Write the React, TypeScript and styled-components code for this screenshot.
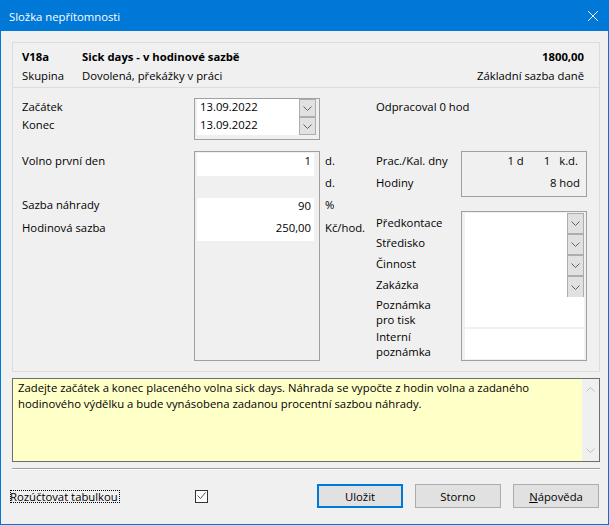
import * as React from 'react'
import styled, { createGlobalStyle } from 'styled-components'

const GlobalStyle = createGlobalStyle`
  html, body {
    margin: 0;
    padding: 0;
    background: #f0f0f0;
  }
  body {
    font-family: 'Open Sans', 'Liberation Sans', sans-serif;
    font-size: 11.3px;
    color: #000;
  }
`

const Dialog = styled.div`
  box-sizing: border-box;
  width: 609px;
  height: 525px;
  background: #f0f0f0;
  border: 1px solid #0078d7;
  border-top: 0;
  display: flex;
  flex-direction: column;
  overflow: hidden;
`

const TitleBar = styled.div`
  height: 31px;
  flex: none;
  background: #0078d7;
  color: #fff;
  display: flex;
  align-items: center;
  justify-content: space-between;
  padding: 0 11px 0 9px;
  margin: 0 -1px;
`

const TitleText = styled.span`
  padding-top: 2px;
`

const Body = styled.div`
  flex: 1;
  display: flex;
  flex-direction: column;
  padding: 11px 8px 0 11px;
  min-height: 0;
`

const Panel = styled.div`
  box-sizing: border-box;
  height: 330px;
  flex: none;
  border: 1px solid #dcdcdc;
  display: flex;
  flex-direction: column;
`

const Head = styled.div`
  height: 45px;
  flex: none;
  box-sizing: border-box;
  border-bottom: 1px solid #dcdcdc;
  padding: 1px 15px 0 9px;
  display: grid;
  grid-template-columns: 60px 1fr auto;
  grid-auto-rows: 19px;
  align-content: center;
  align-items: center;
`

const Strong = styled.div<{ $right?: boolean }>`
  font-weight: 700;
  text-align: ${(p) => (p.$right ? 'right' : 'left')};
`

const Form = styled.div`
  flex: 1;
  display: grid;
  grid-template-columns: 172px 131px 51px 1fr;
  grid-template-rows: 53px 1fr;
  padding: 10px 9px 0 9px;
  min-height: 0;
`

const LabelColumn = styled.div<{ $top?: number }>`
  display: flex;
  flex-direction: column;
  padding-top: ${(p) => p.$top ?? 0}px;
`

const Label = styled.div<{ $h?: number }>`
  height: ${(p) => p.$h ?? 18}px;
  line-height: 18px;
  flex: none;
  white-space: nowrap;
`

const DateBox = styled.div`
  box-sizing: border-box;
  width: 126px;
  height: 42px;
  border: 1px solid #a0a0a0;
  padding: 0 3px 0 2px;
`

const DateRow = styled.div`
  height: 18px;
  background: #fff;
  display: flex;
  justify-content: space-between;
  padding-left: 3px;
  line-height: 16px;
`

const Arrow = styled.div<{ $open?: boolean }>`
  box-sizing: border-box;
  width: 17px;
  height: 100%;
  background: #e1e1e1;
  border: 1px solid #adadad;
  border-bottom-width: ${(p) => (p.$open ? 0 : 1)}px;
  display: flex;
  align-items: center;
  justify-content: center;
  flex: none;
`

const FieldBox = styled.div`
  box-sizing: border-box;
  width: 126px;
  height: 210px;
  border: 1px solid #a0a0a0;
  padding: 1px 5px 0 2px;
  display: flex;
  flex-direction: column;
`

const Cell = styled.div<{ $h: number; $blank?: boolean }>`
  height: ${(p) => p.$h}px;
  flex: none;
  background: ${(p) => (p.$blank ? 'transparent' : '#fff')};
  text-align: right;
  padding-right: 3px;
  line-height: 16px;
`

const Units = styled.div`
  padding-top: 3px;
  display: flex;
  flex-direction: column;
`

const Unit = styled.div<{ $h?: number }>`
  height: ${(p) => p.$h ?? 22}px;
  line-height: 14px;
  flex: none;
  white-space: nowrap;
`

const WorkedNote = styled.div`
  grid-column: 3 / 5;
  padding-left: 51px;
  line-height: 18px;
`

const RightColumn = styled.div`
  display: flex;
  flex-direction: column;
`

const SummaryRow = styled.div`
  display: grid;
  grid-template-columns: 85px 1fr;
  height: 46px;
`

const SummaryBox = styled.div`
  box-sizing: border-box;
  width: 126px;
  height: 46px;
  border: 1px solid #a0a0a0;
  padding-right: 6px;
  display: flex;
  flex-direction: column;
`

const SummaryLine = styled.div<{ $inset?: number }>`
  height: 22px;
  line-height: 18px;
  display: flex;
  justify-content: flex-end;
  padding-right: ${(p) => p.$inset ?? 0}px;
`

const SummaryValue = styled.span<{ $gap?: number }>`
  margin-left: ${(p) => p.$gap ?? 0}px;
`

const SummaryLabel = styled.div`
  height: 22px;
  line-height: 20px;
`

const AccountRow = styled.div`
  display: grid;
  grid-template-columns: 85px 1fr;
  margin-top: 14px;
`

const AccountBox = styled.div`
  box-sizing: border-box;
  width: 126px;
  height: 150px;
  border: 1px solid #a0a0a0;
  padding: 1px 2px 1px 3px;
  display: flex;
  flex-direction: column;
`

const WhiteField = styled.div<{ $h: number; $gap?: number }>`
  height: ${(p) => p.$h}px;
  margin-top: ${(p) => p.$gap ?? 0}px;
  flex: none;
  background: #fff;
  display: flex;
  justify-content: flex-end;
`

const Note = styled.div`
  box-sizing: border-box;
  height: 84px;
  margin-top: 6px;
  flex: none;
  border: 1px solid #6d6d6d;
  background: #ffffc8;
  display: flex;
  justify-content: space-between;
`

const NoteText = styled.div`
  padding: 1px 5px;
  line-height: 16px;
  width: 545px;
`

const ScrollTrack = styled.div`
  width: 17px;
  flex: none;
  background: #f0f0f0;
  display: flex;
  flex-direction: column;
  justify-content: space-between;
  align-items: center;
  padding: 8px 0;
`

const Rule = styled.div`
  height: 1px;
  flex: none;
  margin-top: 6px;
  background: #a0a0a0;
  border-bottom: 1px solid #fff;
`

const Footer = styled.div`
  flex: 1;
  display: flex;
  align-items: center;
  padding: 0 1px 2px 0;
  margin-left: -2px;
`

const TableLabel = styled.div`
  outline: 1px dotted #000;
  outline-offset: -1px;
  height: 13px;
  line-height: 13px;
  width: 110px;
  white-space: nowrap;
`

const Check = styled.div`
  box-sizing: border-box;
  width: 13px;
  height: 13px;
  background: #fff;
  border: 1px solid #333;
  margin-left: 75px;
  display: flex;
  align-items: center;
  justify-content: center;
`

const Buttons = styled.div`
  margin-left: auto;
  display: flex;
  gap: 12px;
`

const Button = styled.button<{ $primary?: boolean }>`
  box-sizing: border-box;
  width: 86px;
  height: 24px;
  padding: 0;
  font: inherit;
  color: #000;
  background: #e1e1e1;
  border: ${(p) => (p.$primary ? '2px solid #0078d7' : '1px solid #adadad')};
`

const Chevron = ({ faded }: { faded?: boolean }) => (
  <svg width="9" height="5" viewBox="0 0 9 5" fill="none" stroke={faded ? '#c0c0c0' : '#606060'} strokeWidth="1">
    <path d="M0.5 0.5L4.5 4.5L8.5 0.5" />
  </svg>
)

const ChevronUp = () => (
  <svg width="9" height="5" viewBox="0 0 9 5" fill="none" stroke="#c0c0c0" strokeWidth="1">
    <path d="M0.5 4.5L4.5 0.5L8.5 4.5" />
  </svg>
)

const App: React.FC = () => {
  return (
    <Dialog>
      <GlobalStyle />
      <TitleBar>
        <TitleText>Složka nepřítomnosti</TitleText>
        <svg width="10" height="10" viewBox="0 0 10 10" stroke="#fff" strokeWidth="1">
          <path d="M0 0L10 10M10 0L0 10" />
        </svg>
      </TitleBar>
      <Body>
        <Panel>
          <Head>
            <Strong>V18a</Strong>
            <Strong>Sick days - v hodinové sazbě</Strong>
            <Strong $right>1800,00</Strong>
            <div>Skupina</div>
            <div>Dovolená, překážky v práci</div>
            <div>Základní sazba daně</div>
          </Head>
          <Form>
            <LabelColumn>
              <Label>Začátek</Label>
              <Label>Konec</Label>
            </LabelColumn>
            <DateBox>
              <DateRow>
                13.09.2022
                <Arrow><Chevron /></Arrow>
              </DateRow>
              <DateRow>
                13.09.2022
                <Arrow><Chevron /></Arrow>
              </DateRow>
            </DateBox>
            <WorkedNote>Odpracoval 0 hod</WorkedNote>
            <LabelColumn $top={1}>
              <Label $h={22}>Volno první den</Label>
              <Label $h={22} />
              <Label $h={23}>Sazba náhrady</Label>
              <Label $h={22}>Hodinová sazba</Label>
            </LabelColumn>
            <FieldBox>
              <Cell $h={23}>1</Cell>
              <Cell $h={22} $blank />
              <Cell $h={22}>90</Cell>
              <Cell $h={21}>250,00</Cell>
            </FieldBox>
            <Units>
              <Unit>d.</Unit>
              <Unit>d.</Unit>
              <Unit $h={23}>%</Unit>
              <Unit>Kč/hod.</Unit>
            </Units>
            <RightColumn>
              <SummaryRow>
                <div>
                  <SummaryLabel>Prac./Kal. dny</SummaryLabel>
                  <SummaryLabel>Hodiny</SummaryLabel>
                </div>
                <SummaryBox>
                  <SummaryLine $inset={2}>
                    <SummaryValue>1 d</SummaryValue>
                    <SummaryValue $gap={20}>1</SummaryValue>
                    <SummaryValue $gap={9}>k.d.</SummaryValue>
                  </SummaryLine>
                  <SummaryLine>8 hod</SummaryLine>
                </SummaryBox>
              </SummaryRow>
              <AccountRow>
                <LabelColumn $top={3}>
                  <Label $h={20}>Předkontace</Label>
                  <Label $h={21}>Středisko</Label>
                  <Label $h={21}>Činnost</Label>
                  <Label $h={20}>Zakázka</Label>
                  <Label $h={15}>Poznámka</Label>
                  <Label $h={17}>pro tisk</Label>
                  <Label $h={15}>Interní</Label>
                  <Label $h={15}>poznámka</Label>
                </LabelColumn>
                <AccountBox>
                  <WhiteField $h={21}><Arrow><Chevron /></Arrow></WhiteField>
                  <WhiteField $h={21}><Arrow><Chevron /></Arrow></WhiteField>
                  <WhiteField $h={21}><Arrow><Chevron /></Arrow></WhiteField>
                  <WhiteField $h={21}><Arrow $open><Chevron /></Arrow></WhiteField>
                  <WhiteField $h={30} />
                  <WhiteField $h={30} $gap={2} />
                </AccountBox>
              </AccountRow>
            </RightColumn>
          </Form>
        </Panel>
        <Note>
          <NoteText>
            Zadejte začátek a konec placeného volna sick days. Náhrada se vypočte z hodin volna a zadaného
            hodinového výdělku a bude vynásobena zadanou procentní sazbou náhrady.
          </NoteText>
          <ScrollTrack>
            <ChevronUp />
            <Chevron faded />
          </ScrollTrack>
        </Note>
        <Rule />
        <Footer>
          <TableLabel>Rozúčtovat tabulkou</TableLabel>
          <Check>
            <svg width="9" height="8" viewBox="0 0 9 8" fill="none" stroke="#555" strokeWidth="1">
              <path d="M0.5 3.5L3.5 6.5L8.5 0.5" />
            </svg>
          </Check>
          <Buttons>
            <Button $primary>Uložit</Button>
            <Button>Storno</Button>
            <Button>
              <u>N</u>ápověda
            </Button>
          </Buttons>
        </Footer>
      </Body>
    </Dialog>
  )
}

export default App
